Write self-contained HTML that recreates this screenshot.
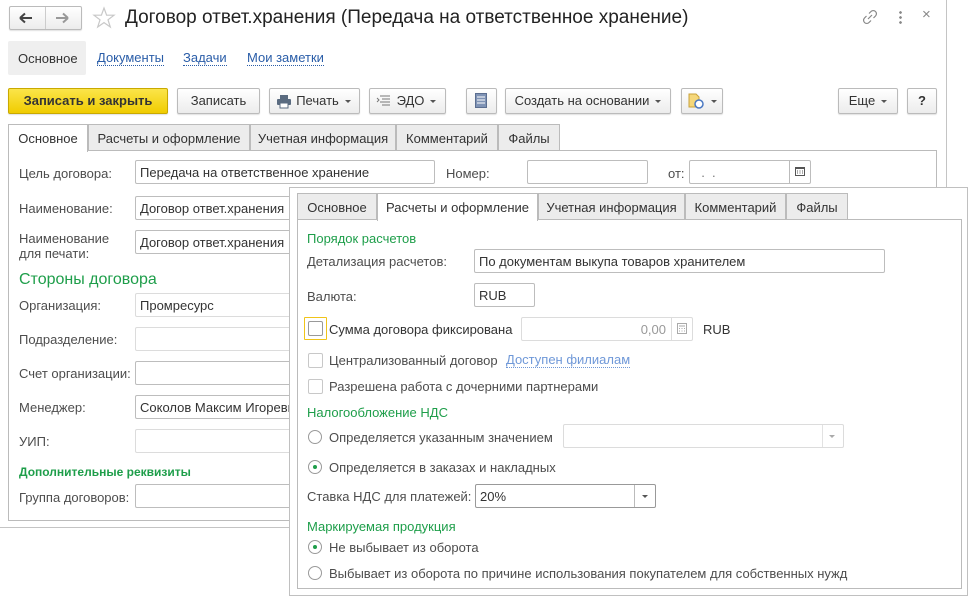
<!DOCTYPE html>
<html><head><meta charset="utf-8"><style>
*{box-sizing:border-box;margin:0;padding:0}
body{width:971px;height:600px;background:#fff;position:relative;overflow:hidden;font-family:"Liberation Sans",Arial,sans-serif;font-size:13px;color:#333}
.a{position:absolute}
.lbl{position:absolute;color:#4d4d4d;font-size:13px;white-space:nowrap}
.inp{position:absolute;border:1px solid #bdbdbd;border-radius:2px;background:#fff;height:24px;padding:4px 0 0 4px;font-size:13px;color:#333;white-space:nowrap;overflow:hidden}
.inp.dis{border-color:#dcdcdc}
.btn{position:absolute;height:26px;border:1px solid #bbb;border-radius:2px;background:linear-gradient(#fff,#ececec);font-size:13px;color:#333;text-align:center;line-height:24px;white-space:nowrap;box-shadow:0 1px 1px rgba(0,0,0,.12)}
.tab{position:absolute;height:26px;border:1px solid #bbb;border-bottom:none;background:#ececec;font-size:13px;color:#333;padding:6px 0 0 0;text-align:center;white-space:nowrap}
.tab.act{background:#fff;height:28px;z-index:2}
.green{position:absolute;color:#1e9e4a;white-space:nowrap}
.cb{position:absolute;width:15px;height:15px;border:1px solid #c8c8c8;border-radius:2px;background:#fff}
.rb{position:absolute;width:14px;height:14px;border:1px solid #9a9a9a;border-radius:50%;background:#fff}
.rb.on::after{content:"";position:absolute;left:4px;top:4px;width:4px;height:4px;border-radius:50%;background:#1e9e4a}
.arr{display:inline-block;width:0;height:0;border-left:3px solid transparent;border-right:3px solid transparent;border-top:3px solid #555;vertical-align:middle;margin-left:6px}
</style></head><body>

<!-- back window -->
<div class="a" style="left:0;top:0;width:947px;height:528px;border:1px solid #c4c4c4;border-top:none;border-left:none"></div>
<div class="btn" style="left:9px;top:6px;width:73px;height:24px;line-height:22px"></div>
<div class="a" style="left:45px;top:7px;width:1px;height:22px;background:#ccc"></div>
<svg class="a" style="left:19px;top:12px" width="14" height="12"><path d="M1 6H13M1 6L6 1.5M1 6L6 10.5" stroke="#444" stroke-width="2" fill="none"/></svg>
<svg class="a" style="left:55px;top:12px" width="14" height="12"><path d="M1 6H13M13 6L8 1.5M13 6L8 10.5" stroke="#999" stroke-width="2" fill="none"/></svg>
<svg class="a" style="left:92px;top:6px" width="24" height="24"><path d="M12 2L14.6 9.2H22L16 13.8L18.3 21L12 16.6L5.7 21L8 13.8L2 9.2H9.4Z" fill="none" stroke="#c8c8c8" stroke-width="1.2"/></svg>
<div class="a" style="left:125px;top:7px;font-size:19px;color:#222;white-space:nowrap">Договор ответ.хранения (Передача на ответственное хранение)</div>
<svg class="a" style="left:862px;top:9px" width="16" height="16"><path d="M6 10L10 6M7 4.5L9 2.5A2.5 2.5 0 0 1 13.5 7L11.5 9M9 11.5L7 13.5A2.5 2.5 0 0 1 2.5 9L4.5 7" stroke="#888" fill="none" stroke-width="1.2"/></svg>
<div class="a" style="left:899px;top:10px;width:3px;height:14px;background:radial-gradient(circle,#888 1.2px,transparent 1.5px) 0 0/3px 5px"></div>
<div class="a" style="left:922px;top:6px;font-size:15px;color:#888">×</div>

<div class="a" style="left:8px;top:41px;width:78px;height:34px;background:#efefef;border-radius:2px"></div>
<div class="a" style="left:18px;top:51px;color:#333">Основное</div>
<div class="a" style="left:97px;top:51px;color:#2a5da8;border-bottom:1px dotted #2a5da8;line-height:14px">Документы</div>
<div class="a" style="left:183px;top:51px;color:#2a5da8;border-bottom:1px dotted #2a5da8;line-height:14px">Задачи</div>
<div class="a" style="left:247px;top:51px;color:#2a5da8;border-bottom:1px dotted #2a5da8;line-height:14px">Мои заметки</div>

<div class="btn" style="left:8px;top:88px;width:160px;background:linear-gradient(#fbe54a,#f0cc00);border-color:#c9a900;font-weight:bold;color:#333">Записать и закрыть</div>
<div class="btn" style="left:177px;top:88px;width:83px">Записать</div>
<div class="btn" style="left:269px;top:88px;width:91px;padding-left:18px">Печать<span class="arr"></span></div>
<svg class="a" style="left:276px;top:95px" width="16" height="14"><rect x="4" y="0" width="8" height="4" fill="#5a6b80"/><rect x="1" y="4" width="14" height="6" rx="1" fill="#5a6b80"/><rect x="4" y="8" width="8" height="5" fill="#fff" stroke="#5a6b80"/></svg>
<div class="btn" style="left:369px;top:88px;width:77px;padding-left:18px">ЭДО<span class="arr"></span></div>
<svg class="a" style="left:376px;top:94px" width="16" height="14"><path d="M4 2H14M6 5H14M4 8H14M6 11H14M1 4L3 6L1 8" stroke="#777" fill="none"/></svg>
<div class="btn" style="left:466px;top:88px;width:31px"></div>
<svg class="a" style="left:475px;top:93px" width="12" height="15"><rect x="0.5" y="0.5" width="11" height="14" fill="#7f93b5" stroke="#5b6e90"/><path d="M2 4H10M2 7H10M2 10H10" stroke="#fff"/></svg>
<div class="btn" style="left:505px;top:88px;width:166px">Создать на основании<span class="arr"></span></div>
<div class="btn" style="left:681px;top:88px;width:42px;padding-left:18px"><span class="arr"></span></div>
<svg class="a" style="left:688px;top:93px" width="16" height="16"><path d="M1 1H8L11 4V14H1Z" fill="#f5d77a" stroke="#c9a23a"/><circle cx="11" cy="11" r="4" fill="#fff" stroke="#4a78c2" stroke-width="1.5"/></svg>
<div class="btn" style="left:838px;top:88px;width:60px">Еще<span class="arr"></span></div>
<div class="btn" style="left:907px;top:88px;width:30px;font-weight:bold">?</div>

<div class="a" style="left:8px;top:150px;width:929px;height:371px;border:1px solid #bbb"></div>
<div class="tab act" style="left:8px;top:124px;width:80px">Основное</div>
<div class="tab" style="left:88px;top:124px;width:162px">Расчеты и оформление</div>
<div class="tab" style="left:250px;top:124px;width:146px">Учетная информация</div>
<div class="tab" style="left:396px;top:124px;width:102px">Комментарий</div>
<div class="tab" style="left:498px;top:124px;width:62px">Файлы</div>

<div class="lbl" style="left:19px;top:166px">Цель договора:</div>
<div class="inp" style="left:135px;top:160px;width:300px">Передача на ответственное хранение</div>
<div class="lbl" style="left:446px;top:166px">Номер:</div>
<div class="inp" style="left:527px;top:160px;width:121px"></div>
<div class="lbl" style="left:668px;top:166px">от:</div>
<div class="inp" style="left:689px;top:160px;width:122px;color:#777">&nbsp;&nbsp;.&nbsp;&nbsp;.</div>
<div class="a" style="left:789px;top:161px;width:1px;height:22px;background:#bbb"></div>
<svg class="a" style="left:795px;top:166px" width="10" height="10"><rect x="0.5" y="1.5" width="9" height="8" fill="none" stroke="#555"/><rect x="0.5" y="1" width="9" height="2" fill="#555"/><path d="M2 5H3M4.5 5H5.5M7 5H8M2 7H3M4.5 7H5.5M7 7H8" stroke="#555"/></svg>

<div class="lbl" style="left:19px;top:201px">Наименование:</div>
<div class="inp" style="left:135px;top:196px;width:160px">Договор ответ.хранения</div>
<div class="lbl" style="left:19px;top:231px;line-height:15px">Наименование<br>для печати:</div>
<div class="inp" style="left:135px;top:230px;width:160px">Договор ответ.хранения</div>
<div class="green" style="left:19px;top:271px;font-size:16px">Стороны договора</div>
<div class="lbl" style="left:19px;top:298px">Организация:</div>
<div class="inp dis" style="left:135px;top:293px;width:160px">Промресурс</div>
<div class="lbl" style="left:19px;top:332px">Подразделение:</div>
<div class="inp dis" style="left:135px;top:327px;width:160px"></div>
<div class="lbl" style="left:19px;top:366px">Счет организации:</div>
<div class="inp" style="left:135px;top:361px;width:160px"></div>
<div class="lbl" style="left:19px;top:400px">Менеджер:</div>
<div class="inp" style="left:135px;top:395px;width:160px">Соколов Максим Игоревич</div>
<div class="lbl" style="left:19px;top:434px">УИП:</div>
<div class="inp dis" style="left:135px;top:429px;width:160px"></div>
<div class="green" style="left:19px;top:465px;font-size:12px;font-weight:bold">Дополнительные реквизиты</div>
<div class="lbl" style="left:19px;top:490px">Группа договоров:</div>
<div class="inp" style="left:135px;top:484px;width:160px"></div>

<!-- front window -->
<div class="a" style="left:289px;top:187px;width:679px;height:409px;background:#fff;border:1px solid #c0c0c0;z-index:5"></div>
<div style="position:absolute;left:0;top:0;width:971px;height:600px;z-index:6">
<div class="a" style="left:297px;top:219px;width:665px;height:370px;border:1px solid #bbb"></div>
<div class="tab" style="left:297px;top:193px;width:80px">Основное</div>
<div class="tab act" style="left:377px;top:193px;width:161px">Расчеты и оформление</div>
<div class="tab" style="left:538px;top:193px;width:147px">Учетная информация</div>
<div class="tab" style="left:685px;top:193px;width:101px">Комментарий</div>
<div class="tab" style="left:786px;top:193px;width:62px">Файлы</div>

<div class="green" style="left:307px;top:231px">Порядок расчетов</div>
<div class="lbl" style="left:307px;top:254px">Детализация расчетов:</div>
<div class="inp" style="left:474px;top:249px;width:411px">По документам выкупа товаров хранителем</div>
<div class="lbl" style="left:307px;top:289px">Валюта:</div>
<div class="inp" style="left:474px;top:283px;width:61px">RUB</div>

<div class="a" style="left:304px;top:317px;width:23px;height:23px;border:1px solid #f0c419;border-radius:1px"></div>
<div class="cb" style="left:308px;top:321px;border-color:#999"></div>
<div class="lbl" style="left:329px;top:322px;color:#333">Сумма договора фиксирована</div>
<div class="inp dis" style="left:521px;top:317px;width:172px;text-align:right;padding-right:26px;color:#999">0,00</div>
<div class="a" style="left:671px;top:318px;width:1px;height:22px;background:#dcdcdc"></div>
<svg class="a" style="left:677px;top:323px" width="10" height="11"><rect x="0.5" y="0.5" width="9" height="10" fill="none" stroke="#aaa"/><path d="M2 3H8M2 5.5H3M4.5 5.5H5.5M7 5.5H8M2 8H3M4.5 8H5.5M7 8H8" stroke="#aaa"/></svg>
<div class="lbl" style="left:703px;top:322px;color:#333">RUB</div>

<div class="cb" style="left:308px;top:353px"></div>
<div class="lbl" style="left:329px;top:353px">Централизованный договор</div>
<div class="a" style="left:506px;top:353px;color:#6f98d8;border-bottom:1px dotted #6f98d8;line-height:14px;white-space:nowrap">Доступен филиалам</div>
<div class="cb" style="left:308px;top:379px"></div>
<div class="lbl" style="left:329px;top:379px">Разрешена работа с дочерними партнерами</div>

<div class="green" style="left:307px;top:405px">Налогообложение НДС</div>
<div class="rb" style="left:308px;top:430px"></div>
<div class="lbl" style="left:329px;top:430px">Определяется указанным значением</div>
<div class="inp dis" style="left:563px;top:424px;width:281px"></div>
<div class="a" style="left:822px;top:425px;width:1px;height:22px;background:#e2e2e2"></div>
<div class="a" style="left:829px;top:435px;border-left:3px solid transparent;border-right:3px solid transparent;border-top:3px solid #aaa"></div>
<div class="rb on" style="left:308px;top:460px"></div>
<div class="lbl" style="left:329px;top:460px">Определяется в заказах и накладных</div>
<div class="lbl" style="left:307px;top:489px">Ставка НДС для платежей:</div>
<div class="inp" style="left:475px;top:484px;width:181px;border-color:#999">20%</div>
<div class="a" style="left:634px;top:485px;width:1px;height:22px;background:#bbb"></div>
<div class="a" style="left:642px;top:495px;border-left:3px solid transparent;border-right:3px solid transparent;border-top:3px solid #555"></div>

<div class="green" style="left:307px;top:519px">Маркируемая продукция</div>
<div class="rb on" style="left:308px;top:540px"></div>
<div class="lbl" style="left:329px;top:540px">Не выбывает из оборота</div>
<div class="rb" style="left:308px;top:566px"></div>
<div class="lbl" style="left:329px;top:566px">Выбывает из оборота по причине использования покупателем для собственных нужд</div>
</div>
</body></html>
